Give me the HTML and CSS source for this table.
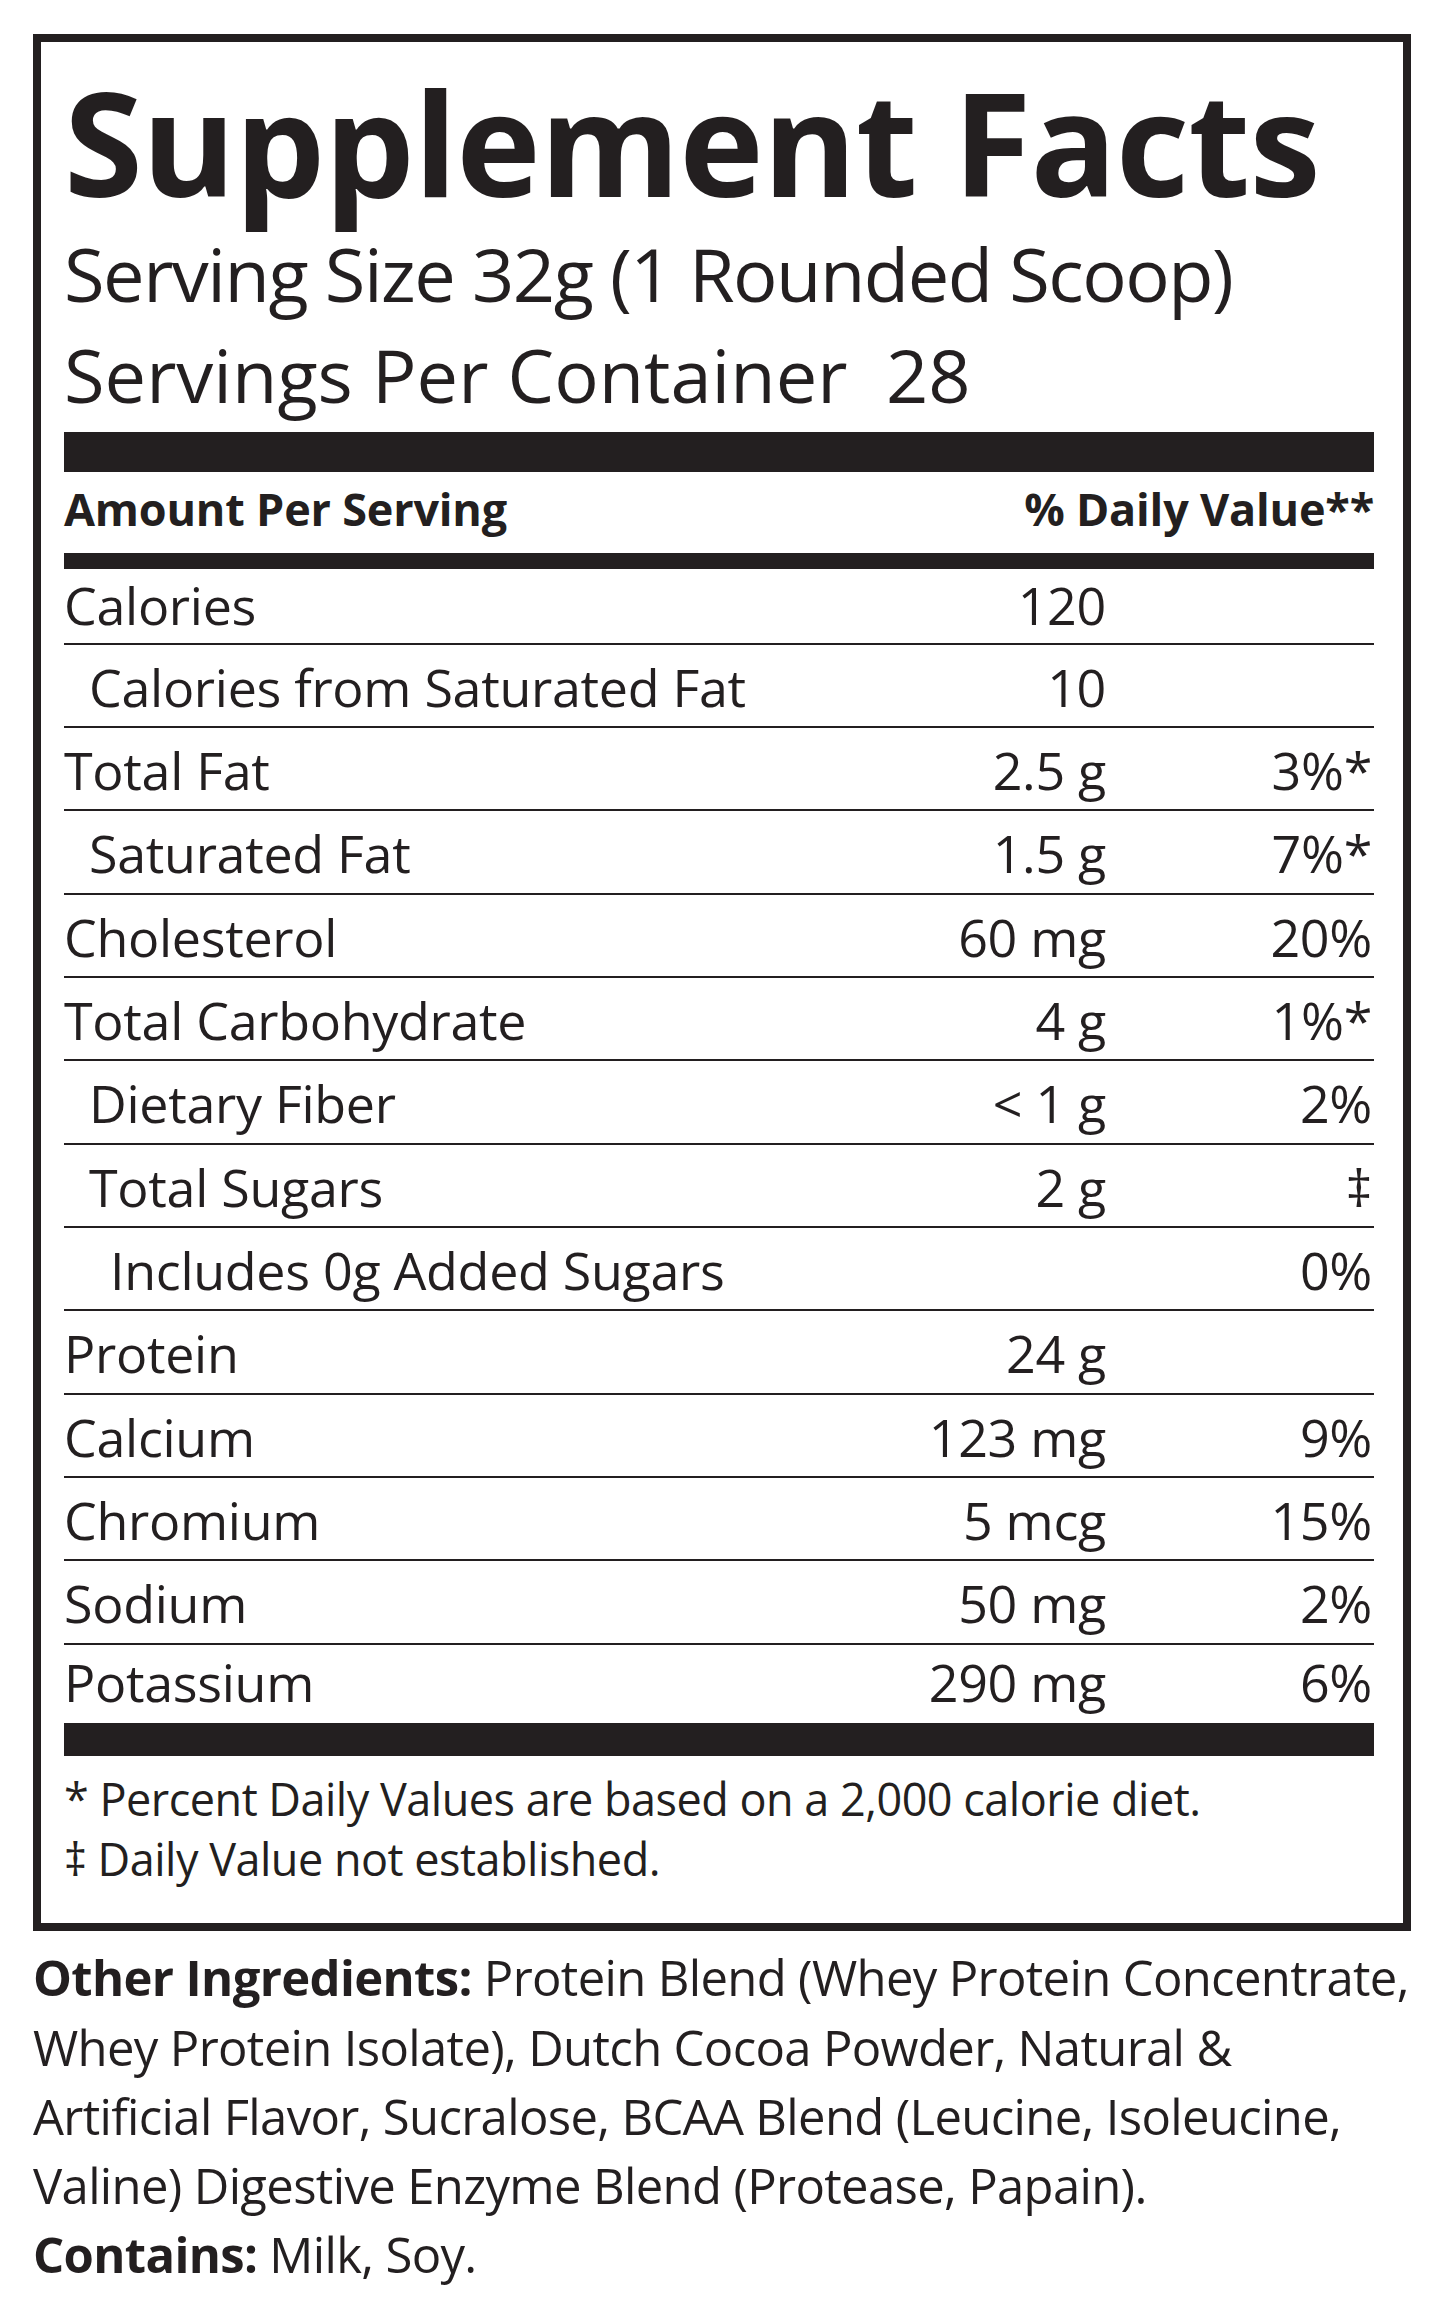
FILE: index.html
```html
<!DOCTYPE html>
<html lang="en">
<head>
<meta charset="utf-8">
<title>Supplement Facts</title>
<link rel="stylesheet" href="styles.css">
</head>
<body>
<div class="label">
  <h1 class="title">Supplement Facts</h1>
  <p class="serving">Serving Size 32g (1 Rounded Scoop)</p>
  <p class="serving serving-count">Servings Per Container&nbsp; 28</p>
  <div class="bar bar-thick"></div>
  <div class="head"><span>Amount Per Serving</span><span>% Daily Value**</span></div>
  <div class="bar bar-mid"></div>
  <div class="row row-first"><span class="name">Calories</span><span class="amt">120</span><span class="dv"></span></div>
  <div class="row"><span class="name ind1">Calories from Saturated Fat</span><span class="amt">10</span><span class="dv"></span></div>
  <div class="row"><span class="name">Total Fat</span><span class="amt">2.5 g</span><span class="dv">3%*</span></div>
  <div class="row"><span class="name ind1">Saturated Fat</span><span class="amt">1.5 g</span><span class="dv">7%*</span></div>
  <div class="row"><span class="name">Cholesterol</span><span class="amt">60 mg</span><span class="dv">20%</span></div>
  <div class="row"><span class="name">Total Carbohydrate</span><span class="amt">4 g</span><span class="dv">1%*</span></div>
  <div class="row"><span class="name ind1">Dietary Fiber</span><span class="amt">&lt; 1 g</span><span class="dv">2%</span></div>
  <div class="row"><span class="name ind1">Total Sugars</span><span class="amt">2 g</span><span class="dv">‡</span></div>
  <div class="row"><span class="name ind2">Includes 0g Added Sugars</span><span class="amt"></span><span class="dv">0%</span></div>
  <div class="row"><span class="name">Protein</span><span class="amt">24 g</span><span class="dv"></span></div>
  <div class="row"><span class="name">Calcium</span><span class="amt">123 mg</span><span class="dv">9%</span></div>
  <div class="row"><span class="name">Chromium</span><span class="amt">5 mcg</span><span class="dv">15%</span></div>
  <div class="row"><span class="name">Sodium</span><span class="amt">50 mg</span><span class="dv">2%</span></div>
  <div class="row row-last"><span class="name">Potassium</span><span class="amt">290 mg</span><span class="dv">6%</span></div>
  <div class="bar bar-bottom"></div>
  <div class="notes">
    <p>* Percent Daily Values are based on a 2,000 calorie diet.</p>
    <p>‡ Daily Value not established.</p>
  </div>
</div>
<div class="ingredients">
  <p><b>Other Ingredients:</b> Protein Blend (Whey Protein Concentrate,<br>Whey Protein Isolate), Dutch Cocoa Powder, Natural &amp;<br>Artificial Flavor, Sucralose, BCAA Blend (Leucine, Isoleucine,<br>Valine) Digestive Enzyme Blend (Protease, Papain).</p>
  <p><b>Contains:</b> Milk, Soy.</p>
</div>
</body>
</html>
```
FILE: styles.css
```css
* { box-sizing: border-box; }
html, body { margin: 0; padding: 0; background: #fff; }
body {
  font-family: "Open Sans", "Noto Sans", sans-serif;
  color: #231f20;
  width: 1445px;
}
p, h1 { margin: 0; }

.label {
  margin: 34px 0 0 33px;
  width: 1378px;
  border: 8px solid #231f20;
  padding: 29.5px 29px 34px 23px;
}

.title {
  font-size: 143px;
  line-height: 140px;
  font-weight: 700;
  letter-spacing: -1px;
  white-space: nowrap;
}

.serving {
  font-size: 74px;
  line-height: 101px;
  font-weight: 400;
  letter-spacing: -1.5px;
  white-space: nowrap;
}
.serving:first-of-type { margin-top: 11.3px; }
.serving-count { letter-spacing: 0; }

.bar { background: #231f20; }
.bar-thick { height: 40px; margin-top: 7px; }
.bar-mid { height: 16px; }
.bar-bottom { height: 33px; }

.head {
  display: flex;
  justify-content: space-between;
  height: 81px;
  padding-top: 15px;
  font-size: 45px;
  line-height: 43px;
  font-weight: 700;
  letter-spacing: -0.2px;
}

.row {
  display: grid;
  grid-template-columns: 1fr 320px 266px;
  height: 83.33px;
  padding-top: 15.8px;
  border-bottom: 2px solid #231f20;
  font-size: 52px;
  line-height: 52px;
  letter-spacing: -0.3px;
  white-space: nowrap;
}
.row-first { height: 76px; padding-top: 9.8px; }
.row-last { height: 78px; padding-top: 10.8px; border-bottom: 0; }

.amt { text-align: right; padding-right: 2px; }
.dv { text-align: right; padding-right: 2px; }
.ind1 { padding-left: 25px; }
.ind2 { padding-left: 46px; }

.notes {
  margin-top: 13.5px;
  font-size: 45px;
  line-height: 60px;
  letter-spacing: -0.5px;
  white-space: nowrap;
}

.ingredients {
  margin: 12px 0 0 33px;
  font-size: 49px;
  line-height: 69.3px;
  letter-spacing: -0.65px;
  white-space: nowrap;
}
.ingredients b { font-weight: 700; }
```
